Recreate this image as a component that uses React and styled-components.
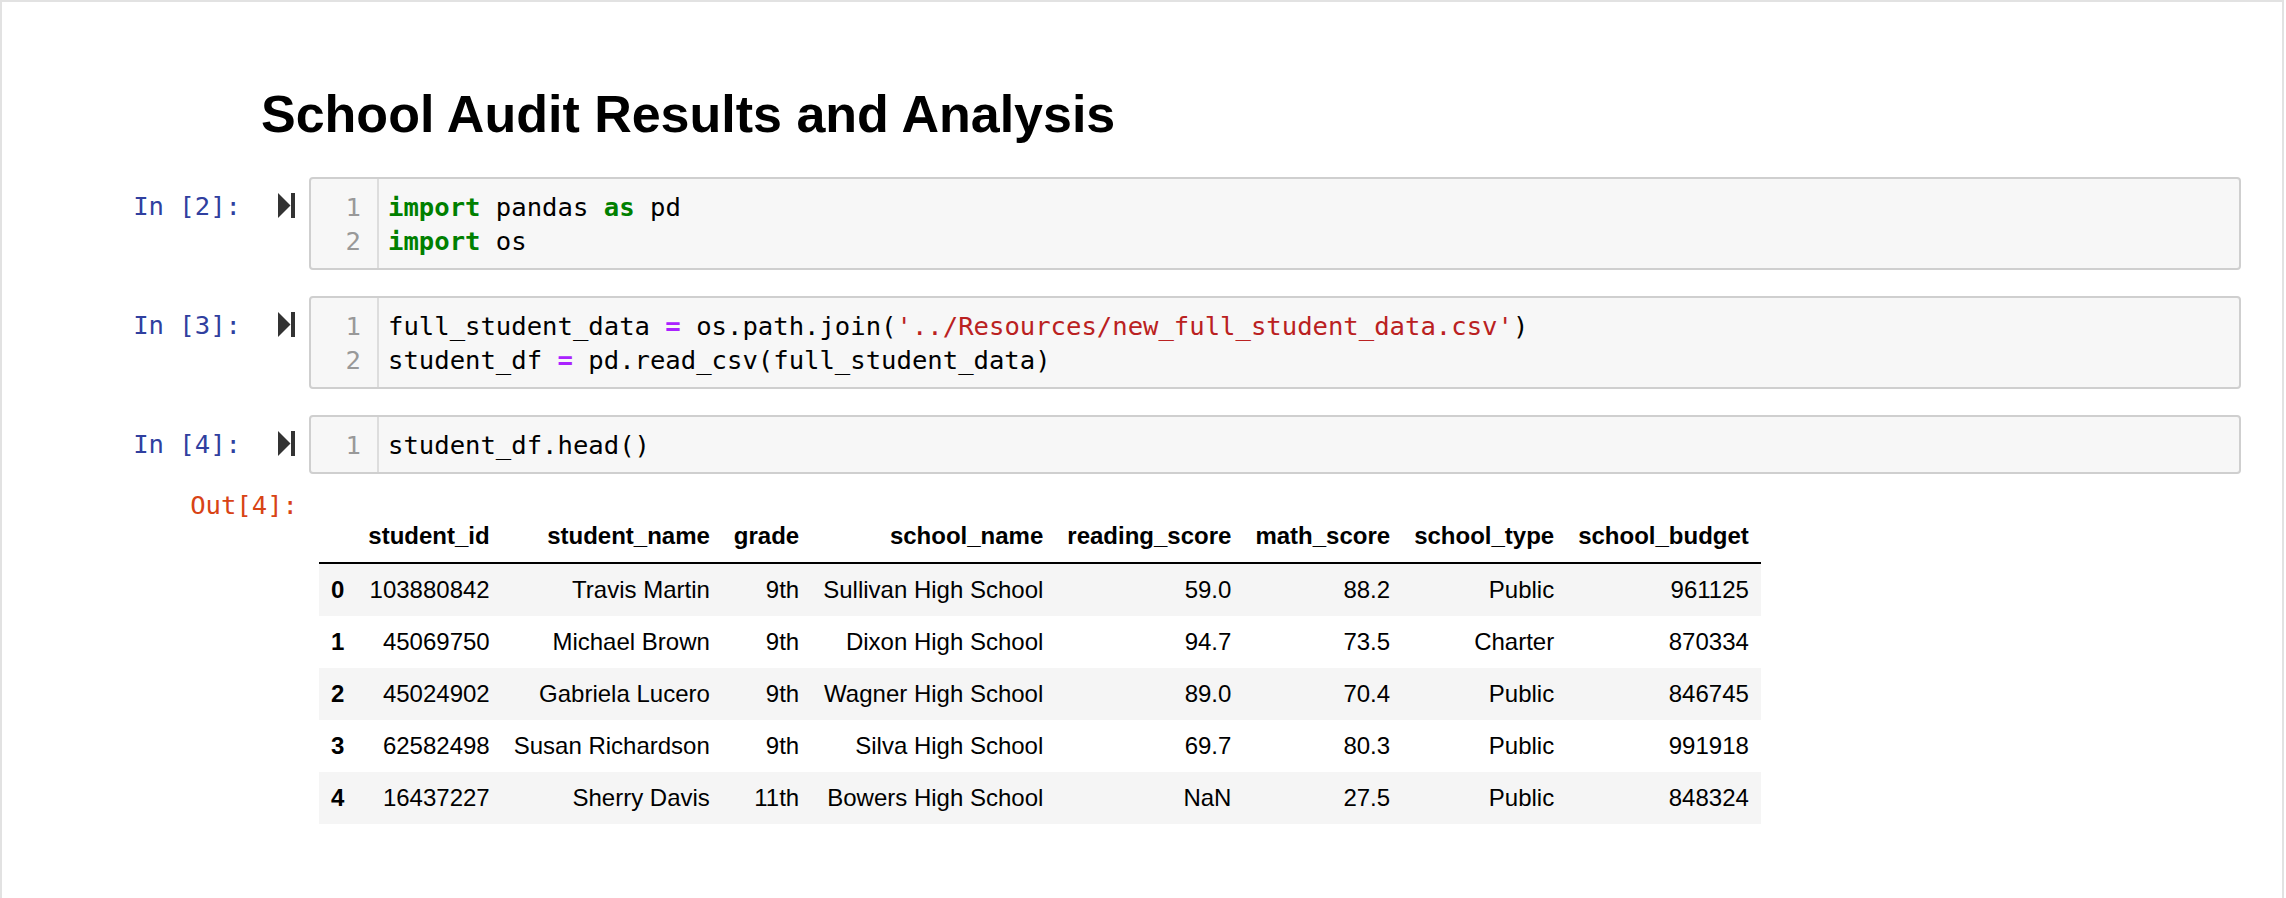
import React from 'react';
import styled, { createGlobalStyle } from 'styled-components';

const GlobalStyle = createGlobalStyle`
  html, body {
    margin: 0;
    padding: 0;
    background: #ffffff;
  }
  body {
    font-family: "Liberation Sans", Arial, sans-serif;
  }
`;

const MONO = `"DejaVu Sans Mono", "Liberation Mono", monospace`;

const Notebook = styled.div`
  box-sizing: border-box;
  width: 2284px;
  min-height: 898px;
  border: 2px solid #e2e2e2;
  border-bottom: none;
  padding: 82px 41px 40px 38px;
  background: #fff;
`;

const Title = styled.h1`
  margin: 0 0 33px 221px;
  font-family: "Liberation Sans", Arial, sans-serif;
  font-size: 52px;
  font-weight: bold;
  line-height: 60px;
  color: #000;
`;

const Cells = styled.div`
  display: flex;
  flex-direction: column;
  gap: 26px;
`;

const Cell = styled.div`
  display: flex;
  flex-direction: column;
`;

const Row = styled.div`
  display: flex;
  align-items: flex-start;
`;

const Prompt = styled.div`
  box-sizing: border-box;
  width: 269px;
  flex: none;
  display: flex;
  justify-content: flex-end;
  align-items: flex-start;
  padding-top: ${p => p.$top}px;
  padding-right: ${p => p.$right}px;
`;

const PromptText = styled.span`
  font-family: ${MONO};
  font-size: 25.6px;
  line-height: 34px;
  white-space: pre;
  color: ${p => (p.$out ? '#D84315' : '#303F9F')};
  margin-right: ${p => p.$gap || 0}px;
`;

const RunIcon = styled.svg`
  margin-top: 4px;
  flex: none;
`;

const Editor = styled.div`
  flex: 1;
  display: flex;
  border: 2px solid #cfcfcf;
  border-radius: 4px;
  background: #f7f7f7;
`;

const Gutter = styled.div`
  box-sizing: border-box;
  width: 68px;
  flex: none;
  border-right: 2px solid #dddddd;
  padding: 10.5px 16px 10.5px 0;
  text-align: right;
  font-family: ${MONO};
  font-size: 25.6px;
  line-height: 34px;
  color: #999999;
`;

const Code = styled.pre`
  margin: 0;
  flex: 1;
  padding: 10.5px 0 10.5px 9px;
  font-family: ${MONO};
  font-size: 25.6px;
  line-height: 34px;
  color: #000;
`;

const Keyword = styled.span`
  color: #008000;
  font-weight: bold;
`;

const Operator = styled.span`
  color: #AA22FF;
  font-weight: bold;
`;

const Str = styled.span`
  color: #BA2121;
`;

const OutputRow = styled(Row)`
  margin-top: 14px;
`;

const OutputArea = styled.div`
  padding: 22px 0 0 10px;
`;

const Table = styled.table`
  border-collapse: collapse;
  border-spacing: 0;
  font-family: "Liberation Sans", Arial, sans-serif;
  font-size: 24px;
  line-height: 28px;
  color: #000;

  th, td {
    padding: 12px;
    text-align: right;
    vertical-align: middle;
    white-space: nowrap;
  }
  thead th {
    border-bottom: 2px solid #000;
    vertical-align: bottom;
  }
  tbody tr:nth-child(odd) {
    background: #f5f5f5;
  }
`;

const Run = () => (
  <RunIcon width="17" height="25" viewBox="0 0 17 25">
    <polygon points="0,0 12.5,12.5 0,25" fill="#333" />
    <rect x="13" y="0" width="4" height="25" fill="#333" />
  </RunIcon>
);

const InputCell = ({ n, lines }) => (
  <Row>
    <Prompt $top={12} $right={14}>
      <PromptText $gap={37}>{`In [${n}]:`}</PromptText>
      <Run />
    </Prompt>
    <Editor>
      <Gutter>
        {lines.map((_, i) => (
          <div key={i}>{i + 1}</div>
        ))}
      </Gutter>
      <Code>
        {lines.map((l, i) => (
          <div key={i}>{l}</div>
        ))}
      </Code>
    </Editor>
  </Row>
);

const columns = ['student_id', 'student_name', 'grade', 'school_name', 'reading_score', 'math_score', 'school_type', 'school_budget'];

const rows = [
  ['103880842', 'Travis Martin', '9th', 'Sullivan High School', '59.0', '88.2', 'Public', '961125'],
  ['45069750', 'Michael Brown', '9th', 'Dixon High School', '94.7', '73.5', 'Charter', '870334'],
  ['45024902', 'Gabriela Lucero', '9th', 'Wagner High School', '89.0', '70.4', 'Public', '846745'],
  ['62582498', 'Susan Richardson', '9th', 'Silva High School', '69.7', '80.3', 'Public', '991918'],
  ['16437227', 'Sherry Davis', '11th', 'Bowers High School', 'NaN', '27.5', 'Public', '848324'],
];

export default function App() {
  return (
    <>
      <GlobalStyle />
      <Notebook>
        <Title>School Audit Results and Analysis</Title>
        <Cells>
          <Cell>
            <InputCell
              n={2}
              lines={[
                <><Keyword>import</Keyword> pandas <Keyword>as</Keyword> pd</>,
                <><Keyword>import</Keyword> os</>,
              ]}
            />
          </Cell>
          <Cell>
            <InputCell
              n={3}
              lines={[
                <>full_student_data <Operator>=</Operator> os.path.join(<Str>'../Resources/new_full_student_data.csv'</Str>)</>,
                <>student_df <Operator>=</Operator> pd.read_csv(full_student_data)</>,
              ]}
            />
          </Cell>
          <Cell>
            <InputCell n={4} lines={[<>student_df.head()</>]} />
            <OutputRow>
              <Prompt $top={0} $right={11}>
                <PromptText $out>Out[4]:</PromptText>
              </Prompt>
              <OutputArea>
                <Table>
                  <thead>
                    <tr>
                      <th></th>
                      {columns.map(c => (
                        <th key={c}>{c}</th>
                      ))}
                    </tr>
                  </thead>
                  <tbody>
                    {rows.map((r, i) => (
                      <tr key={i}>
                        <th>{i}</th>
                        {r.map((v, j) => (
                          <td key={j}>{v}</td>
                        ))}
                      </tr>
                    ))}
                  </tbody>
                </Table>
              </OutputArea>
            </OutputRow>
          </Cell>
        </Cells>
      </Notebook>
    </>
  );
}
